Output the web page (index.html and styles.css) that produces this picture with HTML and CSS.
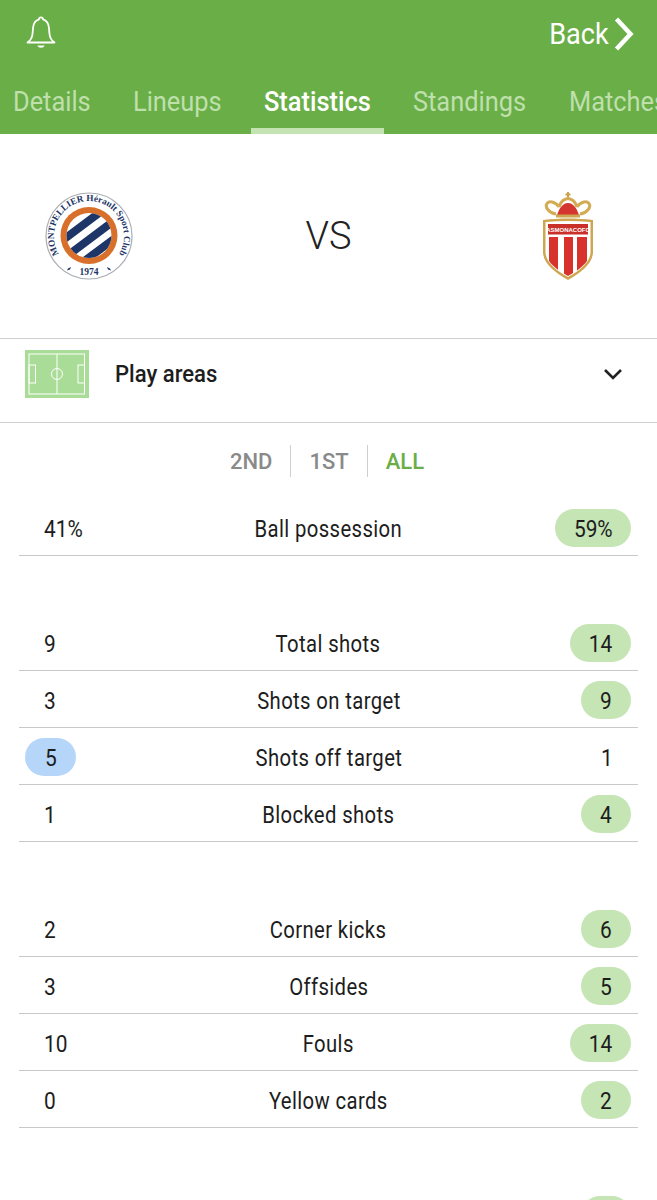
FILE: index.html
```html
<!DOCTYPE html>
<html lang="en">
<head>
<meta charset="utf-8">
<title>Statistics</title>
<link rel="stylesheet" href="styles.css">
</head>
<body>
<header class="header">
  <div class="topbar">
    <svg class="bell" viewBox="0 0 30 36" width="30" height="36" fill="none" stroke="#fff" stroke-width="1.8" stroke-linejoin="round">
      <path d="M1.500 27.500c3-2 4.600-4.500 5-8.500l.6-6.500C7.600 7.500 10.500 5 13 4.300c.1-2.500 3.900-2.500 4 0 2.500.7 5.400 3.200 5.900 8.200l.6 6.500c.4 4 2 6.500 5 8.500z"/>
      <path d="M11.500 30.500h7c-.5 3-6.500 3-7 0z" fill="#fff" stroke="none"/>
    </svg>
    <div class="back">
      <span class="back-label">Back</span>
      <svg viewBox="0 0 20 34" width="20" height="34" fill="none" stroke="#fff" stroke-width="4.500"><path d="M2.500 2l14 15-14 15"/></svg>
    </div>
  </div>
  <nav class="tabs">
    <span class="tab tab-details"><span class="squeeze">Details</span></span>
    <span class="tab tab-lineups"><span class="squeeze">Lineups</span></span>
    <span class="tab tab-active"><span class="squeeze">Statistics</span></span>
    <span class="tab tab-standings"><span class="squeeze">Standings</span></span>
    <span class="tab tab-matches"><span class="squeeze">Matches</span></span>
  </nav>
</header>

<section class="versus">
  <svg class="crest-home" viewBox="0 0 90 90" width="90" height="90">
    <defs>
      <path id="arcTop" d="M21 70.500A35 35 0 1 1 69 70.500"/>
      <clipPath id="inner"><circle cx="45" cy="44.500" r="22.500"/></clipPath>
    </defs>
    <circle cx="45" cy="45" r="43" fill="#fff" stroke="#a9adb3" stroke-width="1.200"/>
    <text class="crest-ring"><textPath href="#arcTop" startOffset="50%" text-anchor="middle">MONTPELLIER Hérault Sport Club</textPath></text>
    <circle cx="45" cy="44.500" r="28.500" fill="#d8702c"/>
    <circle cx="45" cy="44.500" r="22.500" fill="#fff"/>
    <g clip-path="url(#inner)" stroke="#1d3567" stroke-width="8">
      <path d="M15 52L63 16"/>
      <path d="M19 68L75 26"/>
      <path d="M35 74L78 42"/>
    </g>
    <path d="M24 77.500l3-1.500-1 2.500-3 1zM66 77.500l-3-1.500 1 2.500 3 1z" fill="#1d3567"/>
    <text class="crest-year" x="45" y="84" text-anchor="middle">1974</text>
  </svg>
  <span class="vs">VS</span>
  <svg class="crest-away" viewBox="0 0 52 90" width="52" height="90">
    <defs>
      <clipPath id="shieldIn"><path d="M4 31.500c15-1.500 29-1.500 44 0V61c0 10-11 18-22 24C15 79 4 71 4 61z"/></clipPath>
    </defs>
    <path d="M26 1v7M23.500 3.500h5" stroke="#c9a24a" stroke-width="2" fill="none"/>
    <path d="M15 24C18 15 22 12 26 12s8 3 11 12z" fill="#d4352f"/>
    <path d="M14 23C7 22 2.500 16 5 12.500 8 9 14 11.500 17 16M38 23c7-1 11.500-7 9-10.500C44 9 38 11.500 35 16M17 16c1.500-5 5-8 9-8.500 4 .5 7.500 3.500 9 8.500" fill="none" stroke="#d3ab55" stroke-width="3"/>
    <path d="M14 23.500h24v3H14z" fill="#cfa650"/>
    <path d="M1 29c17-2 33-2 50 0v32c0 12-13 21-25 28C14 82 1 73 1 61z" fill="#cfa650"/>
    <path d="M3.500 31c15-1.500 30-1.500 45 0v30c0 10-11 19-22.500 25C14.500 80 3.500 71 3.500 61z" fill="#fff"/>
    <g clip-path="url(#shieldIn)" fill="#d7322b">
      <rect x="7" y="46" width="9" height="42"/>
      <rect x="22" y="46" width="9" height="42"/>
      <rect x="35" y="46" width="10" height="42"/>
    </g>
    <rect x="6" y="33" width="40" height="10.500" fill="#c9302a"/>
    <text class="crest-name" x="26" y="41" text-anchor="middle">ASMONACOFC</text>
  </svg>
</section>

<section class="areas">
  <svg class="pitch" viewBox="0 0 64 48" width="64" height="48" fill="none" stroke="#fff" stroke-width="1">
    <rect x="0" y="0" width="64" height="48" fill="#a9dc97" stroke="none"/>
    <rect x="4" y="4" width="55.500" height="40"/>
    <path d="M32 4v40"/>
    <circle cx="32" cy="24" r="5.500"/>
    <rect x="4" y="15" width="6.500" height="18"/>
    <rect x="53" y="15" width="6.500" height="18"/>
  </svg>
  <span class="areas-label">Play areas</span>
  <svg class="chevron" viewBox="0 0 20 12" width="20" height="12" fill="none" stroke="#222" stroke-width="2.600"><path d="M2 2l8 8 8-8"/></svg>
</section>

<div class="periods">
  <span class="period">2ND</span>
  <span class="period period-mid">1ST</span>
  <span class="period period-on">ALL</span>
</div>

<section class="stat-group">
  <div class="row"><span class="val"><span class="plain"><span class="num">41%</span></span></span><span class="name">Ball possession</span><span class="val val-r"><span class="pill pill-green pill-3"><span class="num">59%</span></span></span></div>
</section>

<section class="stat-group">
  <div class="row"><span class="val"><span class="plain"><span class="num">9</span></span></span><span class="name">Total shots</span><span class="val val-r"><span class="pill pill-green pill-2"><span class="num">14</span></span></span></div>
  <div class="row"><span class="val"><span class="plain"><span class="num">3</span></span></span><span class="name">Shots on target</span><span class="val val-r"><span class="pill pill-green"><span class="num">9</span></span></span></div>
  <div class="row"><span class="val"><span class="pill pill-blue"><span class="num">5</span></span></span><span class="name">Shots off target</span><span class="val val-r"><span class="plain"><span class="num">1</span></span></span></div>
  <div class="row"><span class="val"><span class="plain"><span class="num">1</span></span></span><span class="name">Blocked shots</span><span class="val val-r"><span class="pill pill-green"><span class="num">4</span></span></span></div>
</section>

<section class="stat-group">
  <div class="row"><span class="val"><span class="plain"><span class="num">2</span></span></span><span class="name">Corner kicks</span><span class="val val-r"><span class="pill pill-green"><span class="num">6</span></span></span></div>
  <div class="row"><span class="val"><span class="plain"><span class="num">3</span></span></span><span class="name">Offsides</span><span class="val val-r"><span class="pill pill-green"><span class="num">5</span></span></span></div>
  <div class="row"><span class="val"><span class="plain"><span class="num">10</span></span></span><span class="name">Fouls</span><span class="val val-r"><span class="pill pill-green pill-2"><span class="num">14</span></span></span></div>
  <div class="row"><span class="val"><span class="plain"><span class="num">0</span></span></span><span class="name">Yellow cards</span><span class="val val-r"><span class="pill pill-green"><span class="num">2</span></span></span></div>
</section>

<section class="stat-group stat-group-cut">
  <div class="row"><span class="val"></span><span class="name"></span><span class="val val-r"><span class="pill pill-green"></span></span></div>
</section>
</body>
</html>
```

FILE: styles.css
```css
* { box-sizing: border-box; }
html, body { margin: 0; padding: 0; }
body {
  width: 657px;
  height: 1200px;
  overflow: hidden;
  background: #fff;
  font-family: Roboto, "Liberation Sans", sans-serif;
  color: #1d1d1d;
}

.header { height: 134px; background: #6aae47; display: flex; flex-direction: column; }
.topbar { height: 70px; display: flex; justify-content: space-between; align-items: flex-start; padding: 15px 23px 0 26px; }
.bell { display: block; }
.back { display: flex; align-items: center; gap: 5px; color: #fff; font-size: 29px; height: 38px; }
.back-label { display: inline-block; transform: scaleX(.935); transform-origin: right center; }

.tabs { flex: 1; display: flex; overflow: hidden; white-space: nowrap; font-size: 27px; color: #bfe0ad; }
.tab { height: 64px; padding-top: 16px; flex: none; display: block; }
.squeeze { display: inline-block; transform: scaleX(.94); transform-origin: left center; }
.tab-details { width: 133px; padding-left: 13px; }
.tab-lineups { width: 118px; }
.tab-active { width: 133px; padding-left: 13px; color: #fff; font-weight: 500; border-bottom: 6px solid #c3e3b3; }
.tab-standings { width: 155px; padding-left: 29px; }
.tab-matches { width: 118px; padding-left: 30px; }

.versus { height: 205px; display: grid; grid-template-columns: 1fr auto 1fr; align-items: center; border-bottom: 1px solid #cfcfcf; }
.crest-home { margin-left: 44px; justify-self: start; }
.crest-away { margin-right: 63px; justify-self: end; }
.crest-ring { font-family: "Liberation Serif", serif; font-size: 9.200px; font-weight: 700; fill: #1d3567; }
.crest-year { font-family: "Liberation Serif", serif; font-size: 9.500px; font-weight: 700; fill: #1d3567; }
.crest-name { font-family: "Liberation Sans", sans-serif; font-size: 6px; font-weight: 700; fill: #fff; }
.vs { font-size: 38px; font-weight: 300; color: #222; }

.areas { height: 84px; display: flex; align-items: center; padding: 0 34px 14px 25px; border-bottom: 1px solid #cfcfcf; }
.pitch { flex: none; }
.areas-label { margin-left: 26px; padding-top: 2px; font-size: 23px; font-weight: 500; flex: 1; transform: scaleX(.96); transform-origin: left center; }

.periods { height: 76px; display: flex; justify-content: center; align-items: center; padding-right: 3px; font-size: 22px; font-weight: 500; color: #8a8a8a; }
.period { display: block; height: 32px; line-height: 34px; padding: 0 18px; }
.period-mid { border-left: 1px solid #cfcfcf; border-right: 1px solid #cfcfcf; }
.period-on { color: #6aae47; }

.stat-group { margin: 0 19px 58px; }
.stat-group-cut { height: 15px; margin-bottom: 0; overflow: hidden; }
.row { height: 57px; display: grid; grid-template-columns: 1fr auto 1fr; align-items: center; padding-top: 2px; border-bottom: 1px solid #c8c8c8; font-size: 24px; }
.name { text-align: center; padding-top: 1px; letter-spacing: .45px; transform: scaleX(.845); white-space: nowrap; }
.val { display: flex; min-width: 0; }
.val-r { justify-content: flex-end; }
.num { display: inline-block; padding-top: 1px; transform: scaleX(.87); }
.plain, .pill { display: inline-flex; align-items: center; height: 38px; }
.plain { padding-left: 25px; }
.plain .num { transform-origin: left center; }
.val-r .plain { width: 50px; margin: 0 6px; padding: 0; justify-content: center; }
.val-r .plain .num { transform-origin: center; }
.pill { width: 50px; justify-content: center; border-radius: 19px; margin: 0 6px; }
.val-r .pill { margin-right: 7px; }
.pill-2 { width: 61px; }
.pill-3 { width: 76px; }
.pill-green { background: #c5e5b5; }
.pill-blue { width: 51px; background: #b6d6f9; }
```
